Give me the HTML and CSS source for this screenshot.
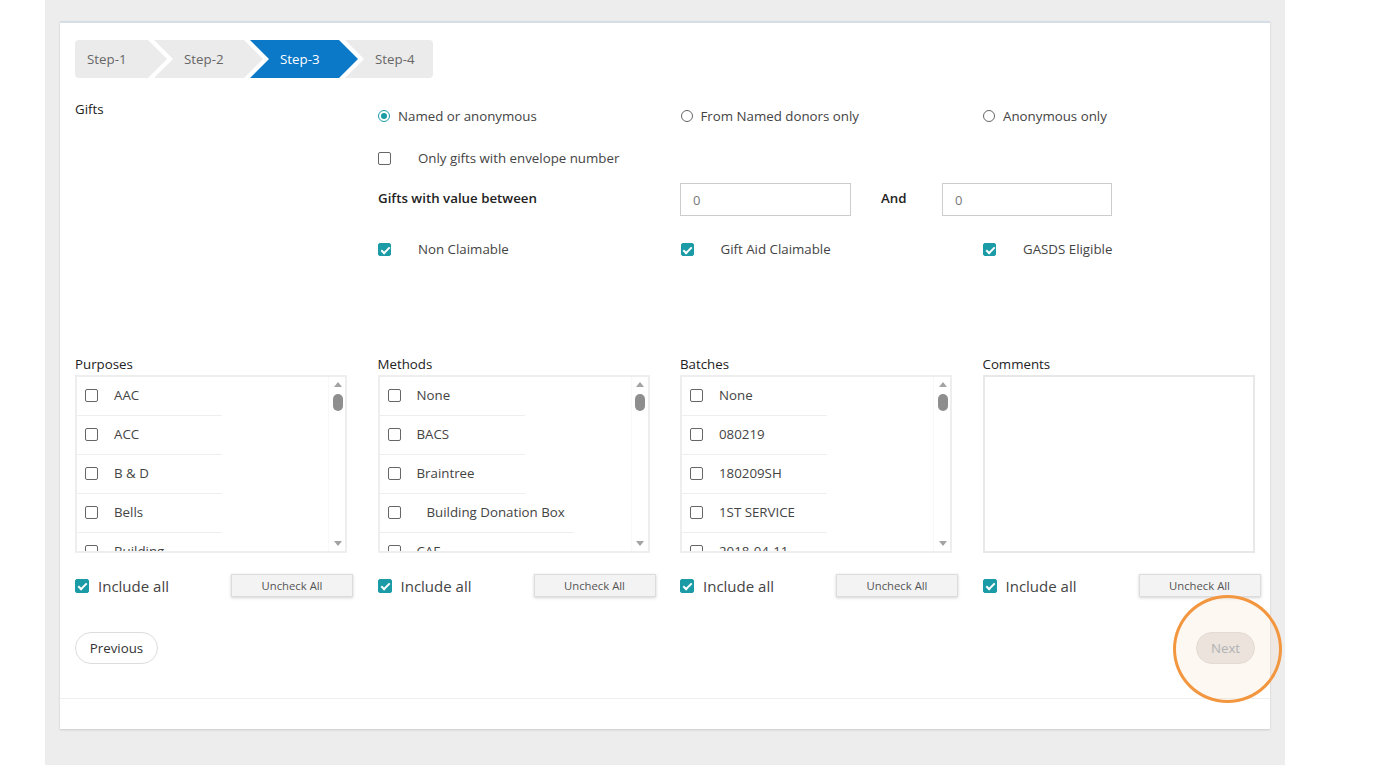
FILE: index.html
```html
<!DOCTYPE html>
<html lang="en">
<head>
    <meta charset="UTF-8">
    <title>Gift Report - Step 3</title>
    <link rel="stylesheet" href="styles.css">
</head>
<body>

<div class="page">
    <div class="card">
        <div class="card-body">

            <div class="steps">
                <div class="step first">Step-1</div>
                <div class="step second">Step-2</div>
                <div class="step active">Step-3</div>
                <div class="step last">Step-4</div>
            </div>

            <div class="gifts">
                <div class="section-title">Gifts</div>
                <div class="gift-options">
                    <div class="opt-row row-radios">
                        <label class="radio-opt"><span class="radio on"></span>Named or anonymous</label>
                        <label class="radio-opt"><span class="radio"></span>From Named donors only</label>
                        <label class="radio-opt"><span class="radio"></span>Anonymous only</label>
                    </div>
                    <div class="opt-row row-envelope">
                        <label class="check-opt"><span class="cb"></span>Only gifts with envelope number</label>
                    </div>
                    <div class="value-row">
                        <div class="value-label">Gifts with value between</div>
                        <input type="text" class="value-input" value="0">
                        <div class="and">And</div>
                        <input type="text" class="value-input second" value="0">
                    </div>
                    <div class="opt-row row-claim">
                        <label class="check-opt"><span class="cb on"></span>Non Claimable</label>
                        <label class="check-opt"><span class="cb on"></span>Gift Aid Claimable</label>
                        <label class="check-opt"><span class="cb on"></span>GASDS Eligible</label>
                    </div>
                </div>
            </div>

            <div class="filters">
                <div class="filter-col">
                    <div class="col-label">Purposes</div>
                    <div class="listbox">
                        <div class="items">
                            <div class="item"><span class="cb"></span>AAC</div>
                            <div class="item"><span class="cb"></span>ACC</div>
                            <div class="item"><span class="cb"></span>B &amp; D</div>
                            <div class="item"><span class="cb"></span>Bells</div>
                            <div class="item"><span class="cb"></span>Building</div>
                        </div>
                        <div class="scrollbar"><span class="arrow-up"></span><span class="thumb"></span><span class="arrow-down"></span></div>
                    </div>
                    <div class="include">
                        <label class="include-label"><span class="cb big on"></span>Include all</label>
                        <button class="uncheck">Uncheck All</button>
                    </div>
                </div>

                <div class="filter-col">
                    <div class="col-label">Methods</div>
                    <div class="listbox">
                        <div class="items">
                            <div class="item"><span class="cb"></span>None</div>
                            <div class="item"><span class="cb"></span>BACS</div>
                            <div class="item"><span class="cb"></span>Braintree</div>
                            <div class="item indent"><span class="cb"></span>Building Donation Box</div>
                            <div class="item"><span class="cb"></span>CAF</div>
                        </div>
                        <div class="scrollbar"><span class="arrow-up"></span><span class="thumb"></span><span class="arrow-down"></span></div>
                    </div>
                    <div class="include">
                        <label class="include-label"><span class="cb big on"></span>Include all</label>
                        <button class="uncheck">Uncheck All</button>
                    </div>
                </div>

                <div class="filter-col">
                    <div class="col-label">Batches</div>
                    <div class="listbox">
                        <div class="items">
                            <div class="item"><span class="cb"></span>None</div>
                            <div class="item"><span class="cb"></span>080219</div>
                            <div class="item"><span class="cb"></span>180209SH</div>
                            <div class="item"><span class="cb"></span>1ST SERVICE</div>
                            <div class="item"><span class="cb"></span>2018-04-11</div>
                        </div>
                        <div class="scrollbar"><span class="arrow-up"></span><span class="thumb"></span><span class="arrow-down"></span></div>
                    </div>
                    <div class="include">
                        <label class="include-label"><span class="cb big on"></span>Include all</label>
                        <button class="uncheck">Uncheck All</button>
                    </div>
                </div>

                <div class="filter-col">
                    <div class="col-label">Comments</div>
                    <div class="listbox comments"></div>
                    <div class="include">
                        <label class="include-label"><span class="cb big on"></span>Include all</label>
                        <button class="uncheck">Uncheck All</button>
                    </div>
                </div>
            </div>

            <div class="nav">
                <button class="btn-prev">Previous</button>
                <button class="btn-next" disabled>Next<span class="highlight"></span></button>
            </div>

        </div>
        <div class="card-footer"></div>
    </div>
</div>

</body>
</html>
```

FILE: styles.css
```css
* {
    box-sizing: border-box;
}
body {
    margin: 0;
    background: #fff;
    font-family: "Open Sans", "Liberation Sans", sans-serif;
    font-size: 13.3px;
    color: #333;
}
.page {
    width: 1240px;
    height: 765px;
    margin-left: 45px;
    padding: 21px 15px 0;
    background: #eeeded;
}
.card {
    width: 1210px;
    background: #fff;
    border-top: 2px solid #d5dee7;
    box-shadow: 0 1px 2px rgba(0, 0, 0, 0.15);
}
.card-body {
    padding: 17px 15px 34px;
}
.card-footer {
    height: 31px;
    border-top: 1px solid #efefef;
}

/* wizard steps */
.steps {
    display: flex;
    height: 38px;
}
.step {
    height: 38px;
    line-height: 38px;
    margin-left: -13px;
    padding-left: 30px;
    background: #ebebeb;
    color: #666;
    clip-path: polygon(0 0, calc(100% - 19px) 0, 100% 50%, calc(100% - 19px) 100%, 0 100%, 19px 50%);
}
.step.first {
    width: 92px;
    margin-left: 0;
    padding-left: 12px;
    border-radius: 4px 0 0 4px;
    clip-path: polygon(0 0, calc(100% - 19px) 0, 100% 50%, calc(100% - 19px) 100%, 0 100%);
}
.step.second {
    width: 109px;
}
.step.active {
    width: 108px;
    background: #0b78c8;
    color: #fff;
}
.step.last {
    width: 88px;
    border-radius: 0 4px 4px 0;
    clip-path: polygon(0 0, 100% 0, 100% 100%, 0 100%, 19px 50%);
}

/* gifts */
.gifts {
    display: grid;
    grid-template-columns: 303px 1fr;
    margin-top: 21px;
}
.section-title {
    line-height: 20px;
    color: #222;
}
.gift-options {
    padding-top: 7px;
}
.opt-row {
    display: grid;
    grid-template-columns: repeat(3, 302.5px);
    height: 20px;
    align-items: center;
}
.row-envelope {
    margin-top: 22px;
}
.row-claim {
    margin-top: 23px;
}
.radio-opt,
.check-opt {
    display: flex;
    align-items: center;
    color: #444;
}
.radio {
    width: 12px;
    height: 12px;
    margin-right: 8px;
    border: 1px solid #666;
    border-radius: 50%;
    position: relative;
}
.radio.on {
    border-color: #1a9ba6;
}
.radio.on::after {
    content: '';
    position: absolute;
    left: 2px;
    top: 2px;
    width: 6px;
    height: 6px;
    border-radius: 50%;
    background: #1a9ba6;
}
.cb {
    flex: none;
    width: 13px;
    height: 13px;
    border: 1px solid #666;
    border-radius: 2px;
    background: #fff;
    position: relative;
}
.check-opt .cb {
    margin-right: 27px;
}
.cb.on {
    border-color: #1a9ba6;
    background: #1a9ba6;
}
.cb.on::after {
    content: '';
    position: absolute;
    left: 3.5px;
    top: 1px;
    width: 3px;
    height: 7px;
    border: solid #fff;
    border-width: 0 2px 2px 0;
    transform: rotate(45deg);
}
.value-row {
    display: flex;
    align-items: center;
    height: 33px;
    margin-top: 15px;
}
.value-label,
.and {
    font-weight: 600;
    color: #222;
    margin-bottom: 3px;
}
.value-label {
    width: 302px;
}
.value-input {
    width: 171px;
    height: 33px;
    padding: 0 12px;
    border: 1px solid #ccc;
    font-family: inherit;
    font-size: 13px;
    color: #777;
    outline: none;
}
.value-input.second {
    width: 170px;
}
.and {
    width: 91px;
    padding-left: 30px;
}

/* filter lists */
.filters {
    display: grid;
    grid-template-columns: repeat(4, 302.5px);
    margin-top: 95px;
}
.col-label {
    line-height: 20px;
    margin-bottom: 1px;
    color: #222;
}
.listbox {
    display: flex;
    width: 272px;
    height: 178px;
    border: 2px solid #eee;
}
.items {
    flex: 1;
    overflow: hidden;
}
.item {
    display: flex;
    align-items: center;
    width: fit-content;
    min-width: 145px;
    height: 39px;
    padding: 0 9px 2px 8px;
    border-bottom: 1px solid #eee;
    color: #444;
}
.item .cb {
    margin-right: 16px;
}
.item.indent .cb {
    margin-right: 26px;
}
.scrollbar {
    width: 17px;
    display: flex;
    flex-direction: column;
    align-items: center;
    padding: 5px 0 5px 1px;
    border-left: 1px solid #f8f8f8;
}
.arrow-up {
    border-left: 4px solid transparent;
    border-right: 4px solid transparent;
    border-bottom: 5px solid #a3a3a3;
}
.thumb {
    width: 10px;
    height: 17px;
    margin-top: 7px;
    border-radius: 5px;
    background: #8e8e8e;
}
.arrow-down {
    margin-top: auto;
    border-left: 4px solid transparent;
    border-right: 4px solid transparent;
    border-top: 5px solid #a3a3a3;
}
.listbox.comments {
    border-color: #e8e8e8;
}
.include {
    display: flex;
    justify-content: space-between;
    align-items: center;
    width: 278px;
    height: 23px;
    margin-top: 21px;
}
.include-label {
    display: flex;
    align-items: center;
    font-size: 15px;
    line-height: 20px;
    color: #444;
}
.cb.big {
    width: 14px;
    height: 14px;
    margin-right: 9px;
}
.cb.big::after {
    left: 4px;
}
.uncheck {
    width: 122px;
    height: 23px;
    padding: 0;
    background: #f3f3f3;
    border: 1px solid #dcdcdc;
    box-shadow: 0 1px 3px rgba(0, 0, 0, 0.18);
    font-family: inherit;
    font-size: 11.3px;
    color: #555;
}

/* navigation */
.nav {
    display: flex;
    justify-content: space-between;
    margin-top: 35px;
}
.btn-prev,
.btn-next {
    height: 32px;
    padding: 0 14px;
    border-radius: 16px;
    font-family: inherit;
    font-size: 13.3px;
}
.btn-prev {
    width: 83px;
    padding: 0;
    background: #fff;
    border: 1px solid #ddd;
    color: #333;
}
.btn-next {
    width: 59px;
    padding: 0;
    position: relative;
    background: #ebe8e6;
    border: 1px solid #e2dfdc;
    color: #a9b2bb;
}
.highlight {
    position: absolute;
    left: -24px;
    top: -38px;
    width: 109px;
    height: 108px;
    border: 3px solid #f39640;
    border-radius: 50%;
    background: rgba(250, 190, 140, 0.1);
    pointer-events: none;
}
```
